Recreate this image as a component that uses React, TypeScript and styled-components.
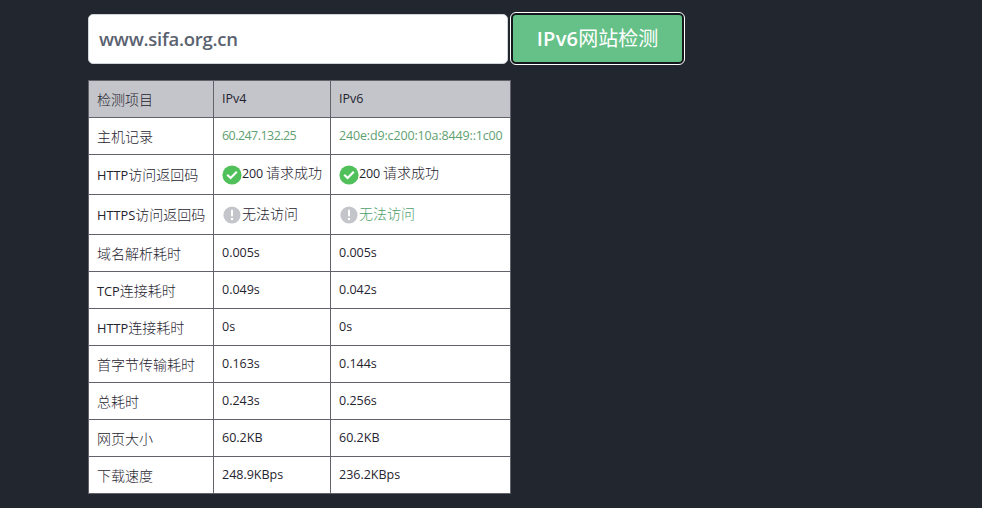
import React from "react";
import styled, { createGlobalStyle } from "styled-components";

const Global = createGlobalStyle`
  html, body { margin: 0; padding: 0; background: #22262e; }
  body { font-family: "Open Sans", "Noto Sans CJK SC", sans-serif; color: #212529; }
`;

const Page = styled.div`
  width: 982px;
  height: 508px;
  padding: 13px 0 0 88px;
  box-sizing: border-box;
  overflow: hidden;
`;

const SearchRow = styled.div`
  display: flex;
  align-items: flex-start;
  gap: 3px;
`;

const UrlBox = styled.div`
  width: 420px;
  height: 50px;
  margin-top: 1px;
  box-sizing: border-box;
  background: #fff;
  border: 1px solid #ced4da;
  border-radius: 5px;
  padding: 0 0 2px 10px;
  display: flex;
  align-items: center;
  font-size: 18.5px;
  letter-spacing: -0.25px;
  font-weight: 600;
  color: #5a6270;
`;

const CheckButton = styled.button`
  width: 173px;
  height: 51px;
  box-sizing: border-box;
  background: #66c188;
  border: 2px solid #14171b;
  outline: 1px solid #fff;
  outline-offset: 0;
  border-radius: 5px;
  margin: 0;
  padding: 0 0 2px;
  color: #fff;
  font-family: inherit;
  font-size: 20px;
  font-weight: 400;
`;

const ButtonLatin = styled.span`
  font-weight: 600;
  letter-spacing: 0.3px;
`;

const Table = styled.table`
  margin-top: 16px;
  width: 423px;
  border-collapse: collapse;
  table-layout: fixed;
  background: #fff;
`;

const Cell = styled.td<{ $head?: boolean; $h: number; $w?: number; $tone?: string; $name?: boolean; $spacing?: string }>`
  box-sizing: border-box;
  height: ${(p) => p.$h}px;
  ${(p) => (p.$w ? `width: ${p.$w}px;` : "")}
  padding: ${(p) => (p.$name && p.$h === 37 ? "2px" : "0")} 0 0 8px;
  border: 1px solid #62626c;
  background: ${(p) => (p.$head ? "#c4c5ca" : "#fff")};
  color: ${(p) => p.$tone ?? "#1f2430"};
  font-size: ${(p) => (p.$name ? "14px" : "12.5px")};
  font-weight: ${(p) => (p.$name ? 300 : 400)};
  ${(p) => (p.$spacing ? `letter-spacing: ${p.$spacing};` : "")}
  line-height: 18px;
  white-space: nowrap;
  vertical-align: middle;
`;

const Latin = styled.span`
  font-size: 12.8px;
  font-weight: 400;
`;

const StatusCode = styled.span`
  font-size: 12.5px;
  font-weight: 400;
  letter-spacing: -0.2px;
`;

const Status = styled.span<{ $tone?: string }>`
  display: flex;
  align-items: center;
  font-size: 14px;
  font-weight: 300;
  color: ${(p) => p.$tone ?? "#1f2430"};
`;

const StatusText = styled.span`
  margin-top: -2px;
`;

const IconSlot = styled.svg`
  flex: none;
  width: 20px;
  height: 20px;
`;

const Ok = () => (
  <IconSlot viewBox="0 0 20 20">
    <circle cx="10" cy="10" r="9.6" fill="#4fc05a" />
    <path d="M5.2 9.8 8.6 13 14.8 6.8" fill="none" stroke="#fff" strokeWidth="2.2" />
  </IconSlot>
);

const Warn = () => (
  <IconSlot viewBox="0 0 20 20">
    <circle cx="10" cy="10" r="8.6" fill="#c4c5ca" />
    <rect x="9" y="4.6" width="2" height="7" rx="1" fill="#fff" />
    <circle cx="10" cy="14" r="1.2" fill="#fff" />
  </IconSlot>
);

const metrics: [React.ReactNode, string, string][] = [
  ["域名解析耗时", "0.005s", "0.005s"],
  [<><Latin>TCP</Latin>连接耗时</>, "0.049s", "0.042s"],
  [<><Latin>HTTP</Latin>连接耗时</>, "0s", "0s"],
  ["首字节传输耗时", "0.163s", "0.144s"],
  ["总耗时", "0.243s", "0.256s"],
  ["网页大小", "60.2KB", "60.2KB"],
  ["下载速度", "248.9KBps", "236.2KBps"],
];

export default function App() {
  return (
    <Page>
      <Global />
      <SearchRow>
        <UrlBox>www.sifa.org.cn</UrlBox>
        <CheckButton><ButtonLatin>IPv6</ButtonLatin>网站检测</CheckButton>
      </SearchRow>
      <Table>
        <tbody>
          <tr>
            <Cell $head $name $h={37} $w={125}>检测项目</Cell>
            <Cell $head $h={37} $w={117}>IPv4</Cell>
            <Cell $head $h={37} $w={180}>IPv6</Cell>
          </tr>
          <tr>
            <Cell $name $h={37}>主机记录</Cell>
            <Cell $h={37} $tone="#5f9f72" $spacing="-0.55px">60.247.132.25</Cell>
            <Cell $h={37} $tone="#5f9f72" $spacing="-0.15px">240e:d9:c200:10a:8449::1c00</Cell>
          </tr>
          <tr>
            <Cell $name $h={40}><Latin>HTTP</Latin>访问返回码</Cell>
            <Cell $h={40}><Status><Ok /><StatusText><StatusCode>200 </StatusCode>请求成功</StatusText></Status></Cell>
            <Cell $h={40}><Status><Ok /><StatusText><StatusCode>200 </StatusCode>请求成功</StatusText></Status></Cell>
          </tr>
          <tr>
            <Cell $name $h={40}><Latin>HTTPS</Latin>访问返回码</Cell>
            <Cell $h={40}><Status><Warn /><StatusText>无法访问</StatusText></Status></Cell>
            <Cell $h={40}><Status $tone="#4f9f6c"><Warn /><StatusText>无法访问</StatusText></Status></Cell>
          </tr>
          {metrics.map(([name, v4, v6], i) => (
            <tr key={i}>
              <Cell $name $h={37}>{name}</Cell>
              <Cell $h={37}>{v4}</Cell>
              <Cell $h={37}>{v6}</Cell>
            </tr>
          ))}
        </tbody>
      </Table>
    </Page>
  );
}
